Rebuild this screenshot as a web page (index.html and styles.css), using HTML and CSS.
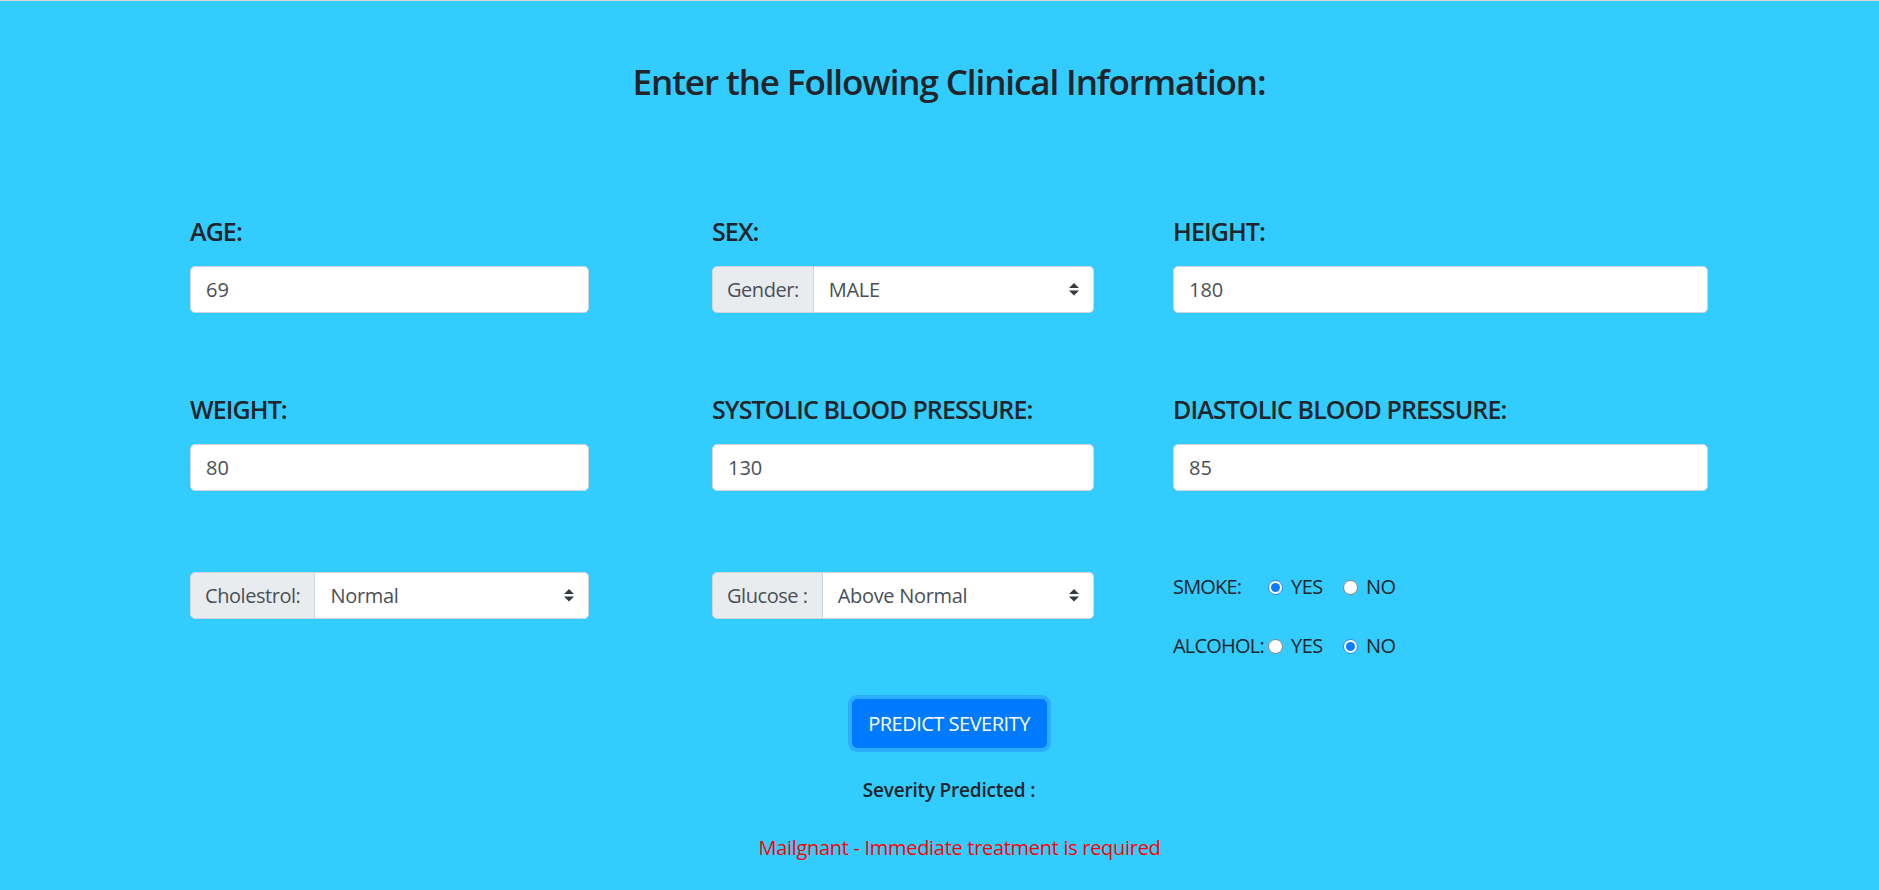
FILE: index.html
```html
<!DOCTYPE html>
<html>
<head>
<meta charset="utf-8">
<link rel="stylesheet" href="styles.css">
</head>
<body>
<div class="page">
  <div class="container">
    <h3 class="title">Enter the Following Clinical Information:</h3>
    <div class="grid">
      <div class="cell c1">
        <h5 class="label">AGE:</h5>
        <div class="control">69</div>
      </div>
      <div class="cell c2">
        <h5 class="label">SEX:</h5>
        <div class="group">
          <div class="addon">Gender:</div>
          <div class="select">MALE
            <svg class="arrow" viewBox="0 0 4 5" width="10" height="12.5"><path d="M2 0L0 2h4zm0 5L0 3h4z" fill="#343a40"/></svg>
          </div>
        </div>
      </div>
      <div class="cell c3">
        <h5 class="label">HEIGHT:</h5>
        <div class="control">180</div>
      </div>

      <div class="cell c1">
        <h5 class="label">WEIGHT:</h5>
        <div class="control">80</div>
      </div>
      <div class="cell c2">
        <h5 class="label">SYSTOLIC BLOOD PRESSURE:</h5>
        <div class="control">130</div>
      </div>
      <div class="cell c3">
        <h5 class="label">DIASTOLIC BLOOD PRESSURE:</h5>
        <div class="control">85</div>
      </div>

      <div class="cell c1">
        <div class="group">
          <div class="addon">Cholestrol:</div>
          <div class="select">Normal
            <svg class="arrow" viewBox="0 0 4 5" width="10" height="12.5"><path d="M2 0L0 2h4zm0 5L0 3h4z" fill="#343a40"/></svg>
          </div>
        </div>
      </div>
      <div class="cell c2">
        <div class="group">
          <div class="addon">Glucose :</div>
          <div class="select">Above Normal
            <svg class="arrow" viewBox="0 0 4 5" width="10" height="12.5"><path d="M2 0L0 2h4zm0 5L0 3h4z" fill="#343a40"/></svg>
          </div>
        </div>
      </div>
      <div class="cell c3 radios">
        <div class="radio-line">
          <span class="rlabel">SMOKE:</span>
          <label class="opt"><input type="radio" name="smoke" checked><span>YES</span></label>
          <label class="opt"><input type="radio" name="smoke"><span>NO</span></label>
        </div>
        <div class="radio-line">
          <span class="rlabel">ALCOHOL:</span>
          <label class="opt"><input type="radio" name="alc"><span>YES</span></label>
          <label class="opt"><input type="radio" name="alc" checked><span>NO</span></label>
        </div>
      </div>
    </div>

    <div class="actions">
      <button class="btn">PREDICT SEVERITY</button>
    </div>
    <div class="sev">Severity Predicted :</div>
    <div class="result">Mailgnant - Immediate treatment is required</div>
  </div>
</div>
</body>
</html>
```

FILE: styles.css
```css
html, body {
  margin: 0;
  padding: 0;
  background: #33ccff;
}
.page {
  border-top: 1px solid #d8d8d8;
  background: #33ccff;
  min-height: 889px;
  font-family: "Segoe UI", "Open Sans", "Noto Sans", sans-serif;
  color: #212529;
}
.container {
  margin-left: 190px;
  width: 1518px;
}
.title {
  margin: 0;
  padding-top: 60px;
  font-size: 35px;
  line-height: 42px;
  font-weight: 600;
  text-align: center;
  letter-spacing: -1.1px;
}
.grid {
  display: grid;
  grid-template-columns: 522px 461px 535px;
  row-gap: 81px;
  margin-top: 113px;
  align-items: start;
}
.c1 { width: 399px; }
.c2 { width: 382px; }
.c3 { width: 535px; }
.label {
  margin: 0 0 20px;
  font-size: 25px;
  line-height: 30px;
  font-weight: 600;
  letter-spacing: -0.9px;
  white-space: nowrap;
}
.control {
  height: 47px;
  box-sizing: border-box;
  border: 1px solid #ced4da;
  border-radius: 5px;
  background: #fff;
  padding: 0 15px;
  display: flex;
  align-items: center;
  font-size: 20px;
  color: #495057;
}
.group {
  display: flex;
  height: 47px;
}
.addon {
  box-sizing: border-box;
  border: 1px solid #ced4da;
  border-radius: 5px 0 0 5px;
  background: #e9ecef;
  padding: 0 14px;
  display: flex;
  align-items: center;
  font-size: 20px;
  color: #495057;
  white-space: nowrap;
  letter-spacing: -0.45px;
}
.select {
  flex: 1;
  box-sizing: border-box;
  border: 1px solid #ced4da;
  border-left: none;
  border-radius: 0 5px 5px 0;
  background: #fff;
  padding: 0 14px 0 15px;
  display: flex;
  align-items: center;
  font-size: 20px;
  color: #495057;
  letter-spacing: -0.3px;
}
.arrow {
  margin-left: auto;
}
.radios {
  display: flex;
  flex-direction: column;
  gap: 29px;
}
.radio-line {
  display: flex;
  align-items: center;
  height: 30px;
  font-size: 20px;
  line-height: 30px;
  color: #212529;
}
.rlabel {
  width: 95px;
  white-space: nowrap;
  letter-spacing: -0.8px;
}
.opt {
  width: 75px;
  display: flex;
  align-items: center;
}
.opt input {
  width: 15px;
  height: 15px;
  margin: 0 8px 0 0;
  accent-color: #0b7bff;
}
.opt span {
  letter-spacing: -0.5px;
}
.actions {
  display: flex;
  justify-content: center;
  margin-top: 38px;
}
.btn {
  width: 195px;
  height: 49px;
  box-sizing: border-box;
  background: #007bff;
  border: 1px solid #007bff;
  border-radius: 5px;
  color: #fff;
  font-family: "Segoe UI", "Open Sans", "Noto Sans", sans-serif;
  font-size: 20px;
  padding: 0;
  letter-spacing: -0.5px;
  box-shadow: 0 0 0 4px rgba(38, 143, 255, 0.5);
  white-space: nowrap;
}
.sev {
  margin-top: 27px;
  text-align: center;
  font-size: 19px;
  line-height: 30px;
  font-weight: 600;
  letter-spacing: -0.2px;
}
.result {
  margin-top: 28px;
  padding-left: 21px;
  text-align: center;
  font-size: 20px;
  line-height: 30px;
  color: #ff0000;
  letter-spacing: -0.3px;
}
```
